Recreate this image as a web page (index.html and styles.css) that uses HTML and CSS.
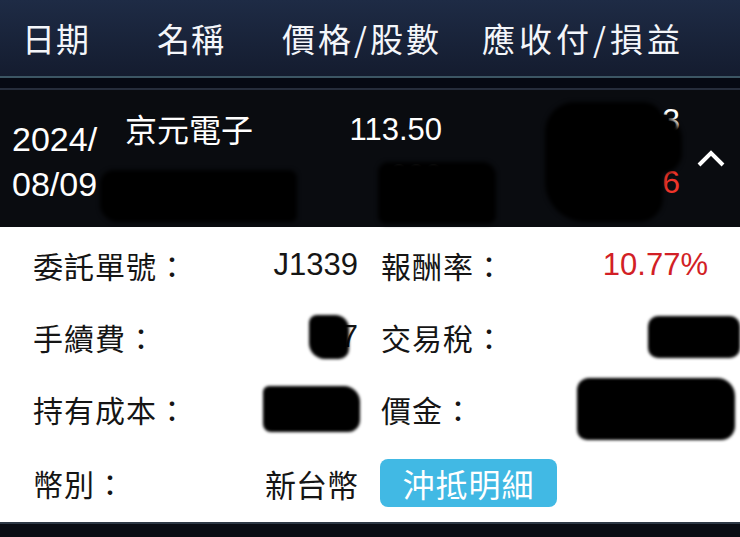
FILE: index.html
```html
<!DOCTYPE html>
<html lang="zh-Hant">
<head>
<meta charset="utf-8">
<link rel="stylesheet" href="styles.css">
</head>
<body>
<div class="screen">
  <header class="head">
    <div class="h-date">日期</div>
    <div class="h-name">名稱</div>
    <div class="h-price">價格/股數</div>
    <div class="h-pl">應收付/損益</div>
  </header>
  <div class="head-rule"></div>
  <div class="head-band"></div>

  <section class="trade">
    <div class="t-date"><div>2024/</div><div>08/09</div></div>
    <div class="t-name"><div>京元電子</div><div class="dim">&nbsp;</div></div>
    <div class="t-price"><div>113.50</div><div class="dim">000</div></div>
    <div class="t-pl"><div class="peek">3</div><div class="red">6</div></div>
    <div class="t-chev">
      <svg width="28" height="18" viewBox="0 0 28 18"><polyline points="2,16 14,4 26,16" fill="none" stroke="#fff" stroke-width="4"/></svg>
    </div>
    <span class="blob b1"></span>
    <span class="blob b2"></span>
    <span class="blob b3"></span>
    <span class="blob b4"></span>
  </section>

  <section class="detail">
    <div class="d-row">
      <div class="lab">委託單號：</div><div class="val">J1339</div>
      <div class="lab right">報酬率：</div><div class="val red2">10.77%</div>
    </div>
    <div class="d-row">
      <div class="lab">手續費：</div><div class="val"><span class="ink ink-fee"></span>7</div>
      <div class="lab right">交易稅：</div><div class="val"><span class="ink ink-tax"></span></div>
    </div>
    <div class="d-row">
      <div class="lab">持有成本：</div><div class="val"><span class="ink ink-cost"></span></div>
      <div class="lab right">價金：</div><div class="val"><span class="ink ink-amt"></span></div>
    </div>
    <div class="d-row last">
      <div class="lab">幣別：</div><div class="val">新台幣</div>
      <div class="btn-cell"><span class="btn">沖抵明細</span></div>
    </div>
  </section>
  <div class="foot"></div>
</div>
</body>
</html>
```
FILE: styles.css
```css
html, body {
  margin: 0;
  padding: 0;
  background: #0a0c10;
}
body {
  font-family: "Liberation Sans", "Noto Sans CJK TC", sans-serif;
}
.screen {
  width: 740px;
  height: 537px;
  overflow: hidden;
  display: flex;
  flex-direction: column;
}
.head {
  height: 76px;
  flex: none;
  background: linear-gradient(#1e2b45, #141c2f);
  color: #f4f6fa;
  font-family: "Noto Sans CJK TC", sans-serif;
  font-size: 33px;
  display: grid;
  grid-template-columns: 135px 125px 200px 1fr;
  align-items: center;
  padding-left: 22px;
  box-sizing: border-box;
}
.head > div { line-height: 76px; letter-spacing: 3px; white-space: nowrap; }
.head > .h-date, .head > .h-name { letter-spacing: 1px; }
.head > .h-pl { letter-spacing: 4px; }
.head-rule { height: 2px; background: #3c5664; flex: none; }
.head-band { height: 10px; background: #060913; border-bottom: 2px solid #262d3c; flex: none; }

.trade {
  position: relative;
  height: 137px;
  flex: none;
  background: #0a0c10;
  color: #fff;
  display: grid;
  grid-template-columns: 113px 207px 110px 238px 1fr;
  padding-left: 12px;
  box-sizing: border-box;
}
.t-date {
  font-size: 34px;
  letter-spacing: 0;
  line-height: 45px;
  padding-top: 27px;
}
.t-name {
  font-family: "Noto Sans CJK TC", sans-serif;
  font-size: 32px;
  line-height: 46px;
  padding-top: 15px;
}
.t-price {
  font-size: 31px;
  line-height: 46px;
  padding-top: 17px;
  text-align: right;
}
.t-pl {
  font-size: 32px;
  line-height: 50px;
  text-align: right;
}
.t-pl .peek { padding-top: 5px; }
.t-pl .red { color: #f0352a; padding-top: 12px; }
.dim { color: #555; }
.t-chev {
  display: flex;
  justify-content: flex-start;
  padding-left: 17px;
  padding-top: 59px;
}
.blob {
  position: absolute;
  background: #000;
  filter: blur(2px);
}
.b1 { left: 100px; top: 80px; width: 197px; height: 52px; border-radius: 14px 8px 6px 18px; }
.b2 { left: 378px; top: 72px; width: 118px; height: 62px; border-radius: 10px 14px 8px 8px; }
.b3 { left: 545px; top: 12px; width: 118px; height: 120px; border-radius: 30px 20px 24px 40px; }
.b4 { left: 600px; top: 25px; width: 82px; height: 58px; border-radius: 20px 24px 20px 10px; }

.detail {
  height: 295px;
  flex: none;
  background: #fff;
  color: #151515;
  box-sizing: border-box;
  padding: 2px 32px 0 33px;
}
.d-row {
  display: grid;
  grid-template-columns: 160px 165px 150px 200px;
  height: 72px;
  align-items: center;
}
.lab.right { padding-left: 23px; }
.d-row.last { height: 76px; }
.lab {
  font-family: "Noto Sans CJK TC", sans-serif;
  font-size: 30px;
  letter-spacing: 1px;
  white-space: nowrap;
}
.val {
  font-size: 31px;
  text-align: right;
  white-space: nowrap;
  display: flex;
  justify-content: flex-end;
  align-items: center;
}
.red2 { color: #d21f26; }
.ink {
  display: inline-block;
  background: #000;
  filter: blur(1.5px);
}
.ink-fee { width: 40px; height: 44px; border-radius: 8px 14px 10px 16px; margin-right: -8px; }
.ink-tax { width: 92px; height: 42px; border-radius: 10px; margin-right: -32px; }
.ink-cost { width: 97px; height: 46px; border-radius: 6px 16px 12px 8px; margin-right: -2px; }
.ink-amt { width: 158px; height: 62px; border-radius: 12px 18px 14px 10px; margin-right: -27px; }
.btn-cell {
  grid-column: span 2;
  display: flex;
  align-items: center;
  padding-left: 22px;
}
.btn {
  display: inline-block;
  width: 177px;
  height: 48px;
  line-height: 48px;
  text-align: center;
  background: #41b9e4;
  color: #fff;
  border-radius: 8px;
  font-family: "Noto Sans CJK TC", sans-serif;
  font-size: 32px;
  letter-spacing: 1px;
  white-space: nowrap;
}
.foot {
  flex: 1;
  background: #0a0d14;
  border-top: 2px solid #2e3946;
}
```
